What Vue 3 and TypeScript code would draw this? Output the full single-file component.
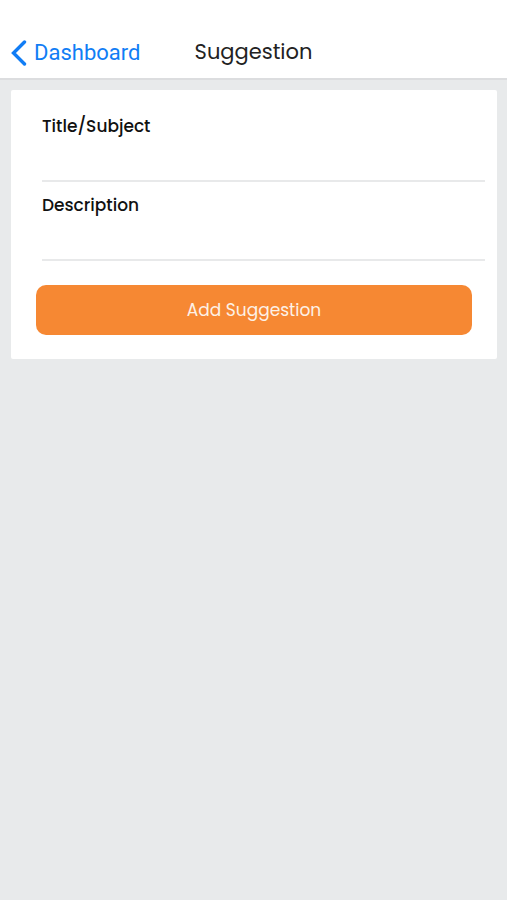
<script setup lang="ts">
import { ref } from 'vue'

const title = ref('')
const description = ref('')

function addSuggestion(): void {
  title.value = ''
  description.value = ''
}
</script>

<template>
  <div class="screen">
    <header class="navbar">
      <a class="back" href="#dashboard">
        <svg class="chevron" viewBox="0 0 16 26" aria-hidden="true">
          <path d="M13.500 2 2.500 13l11 11" />
        </svg>
        <span>Dashboard</span>
      </a>
      <h1 class="heading">Suggestion</h1>
    </header>

    <main class="content">
      <form class="card" @submit.prevent="addSuggestion">
        <div class="fields">
          <div class="field">
            <label for="title">Title/Subject</label>
            <input id="title" v-model="title" type="text" />
          </div>
          <div class="field">
            <label for="description">Description</label>
            <input id="description" v-model="description" type="text" />
          </div>
        </div>
        <button class="submit" type="submit">Add Suggestion</button>
      </form>
    </main>
  </div>
</template>

<style>
body {
  background: #e8eaeb;
}
</style>

<style scoped>
.screen {
  min-height: 100vh;
  background: #e8eaeb;
  font-family: Poppins, Inter, "Liberation Sans", sans-serif;
  color: #111;
}

.navbar {
  display: grid;
  grid-template-columns: 1fr auto 1fr;
  align-items: center;
  padding: 26px 11px 0;
  height: 80px;
  box-sizing: border-box;
  background: #fff;
  border-bottom: 2px solid #dcdddf;
}

.back {
  display: flex;
  align-items: center;
  gap: 7px;
  padding-top: 2px;
  font-family: Roboto, "Liberation Sans", sans-serif;
  font-size: 22px;
  line-height: 28px;
  color: #117df5;
  text-decoration: none;
}

.chevron {
  width: 16px;
  height: 26px;
  fill: none;
  stroke: currentColor;
  stroke-width: 3.4;
  stroke-linecap: round;
  stroke-linejoin: miter;
}

.heading {
  margin: 0;
  font-size: 21px;
  line-height: 28px;
  font-weight: 400;
  color: #222;
}

.content {
  padding: 10px 10px 10px 11px;
}

.card {
  display: flex;
  flex-direction: column;
  gap: 24px;
  padding: 22px 12px 24px 25px;
  background: #fff;
  border-radius: 2px;
}

.fields {
  display: flex;
  flex-direction: column;
  gap: 9px;
  margin-left: 6px;
}

.field {
  display: flex;
  flex-direction: column;
}

.field label {
  font-size: 17px;
  line-height: 28px;
  font-weight: 500;
}

.field input {
  height: 42px;
  box-sizing: border-box;
  padding: 0;
  border: 0;
  border-bottom: 2px solid #e8e9ea;
  border-radius: 0;
  outline: none;
  background: transparent;
  font: inherit;
  font-size: 17px;
}

.submit {
  height: 50px;
  margin-right: 13px;
  padding: 0;
  border: 0;
  border-radius: 10px;
  background: #f68833;
  color: #fdf1e6;
  font: inherit;
  font-size: 17px;
  cursor: pointer;
}
</style>
